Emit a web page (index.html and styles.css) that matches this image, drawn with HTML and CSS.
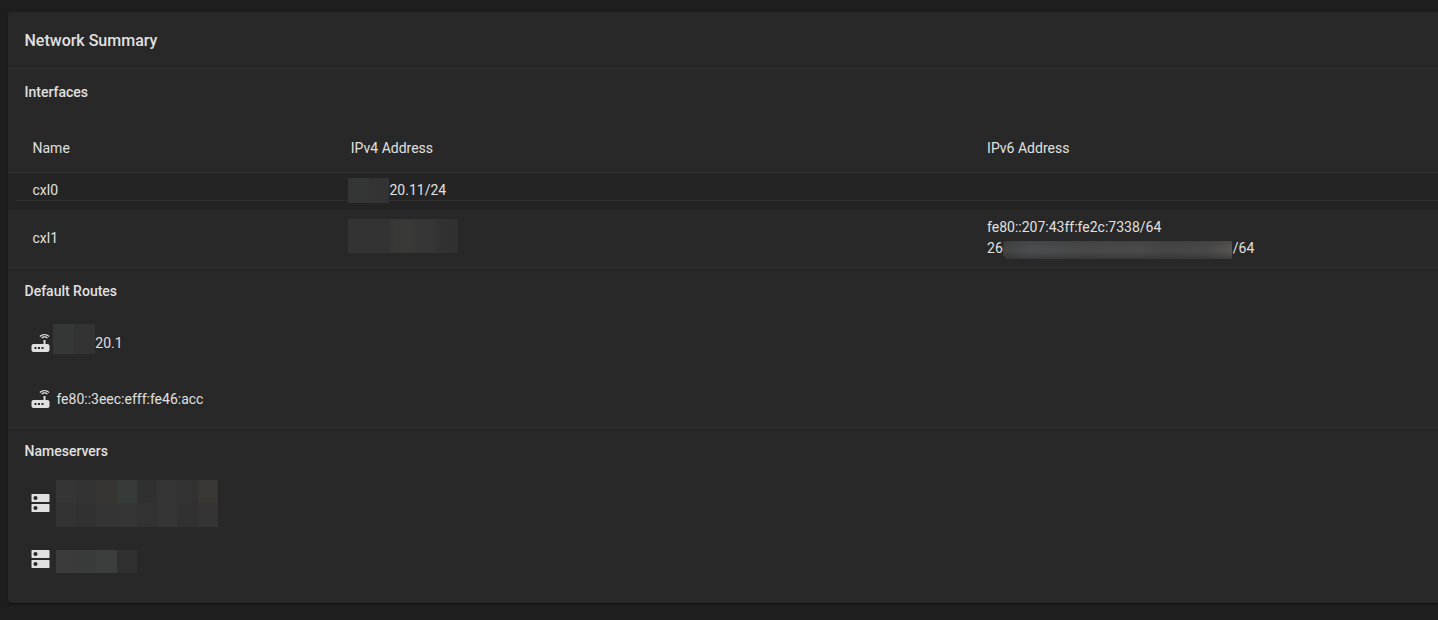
FILE: index.html
```html
<!DOCTYPE html>
<html lang="en">
<head>
    <meta charset="UTF-8">
    <meta name="viewport" content="width=device-width, initial-scale=1.0">
    <title>Network Summary</title>
    <link rel="stylesheet" href="styles.css">
</head>
<body>
    <svg class="symbols">
        <symbol id="router" viewBox="-0.5 0 24 24">
            <path d="M20.2 5.9l.8-.8C19.6 3.7 17.8 3 16 3s-3.6.7-5 2.1l.8.8C13 4.8 14.5 4.2 16 4.2s3 .6 4.2 1.7zm-.9.8c-.9-.9-2.1-1.4-3.3-1.4s-2.4.5-3.3 1.4l.8.8c.7-.7 1.6-1 2.5-1s1.8.3 2.5 1l.8-.8zM19 13h-2V9h-2v4H5c-1.1 0-2 .9-2 2v4c0 1.1.9 2 2 2h14c1.1 0 2-.9 2-2v-4c0-1.1-.9-2-2-2zM8 18H6v-2h2v2zm3.5 0h-2v-2h2v2zm3.5 0h-2v-2h2v2z"/>
        </symbol>
        <symbol id="dns" viewBox="-0.5 0 24 24">
            <path d="M20.5 13h-17c-.3 0-.5.2-.5.5v7c0 .3.2.5.5.5h17c.3 0 .5-.2.5-.5v-7c0-.3-.2-.5-.5-.5zM7 19c-1.1 0-2-.9-2-2s.9-2 2-2 2 .9 2 2-.9 2-2 2zM20.5 3h-17c-.3 0-.5.2-.5.5v7c0 .3.2.5.5.5h17c.3 0 .5-.2.5-.5v-7c0-.3-.2-.5-.5-.5zM7 9c-1.1 0-2-.9-2-2s.9-2 2-2 2 .9 2 2-.9 2-2 2z"/>
        </symbol>
    </svg>

    <div class="card">
        <h3 class="card-title">Network Summary</h3>

        <section class="interfaces">
            <h4>Interfaces</h4>
            <div class="row row-head">
                <span>Name</span>
                <span>IPv4 Address</span>
                <span>IPv6 Address</span>
            </div>
            <div class="row row-odd">
                <span>cxl0</span>
                <span class="address"><i class="mask mask-ip"></i>20.11/24</span>
                <span></span>
            </div>
            <div class="row row-even">
                <span>cxl1</span>
                <span class="address"><i class="mask mask-ip-full"></i></span>
                <span class="address-list">
                    <span>fe80::207:43ff:fe2c:7338/64</span>
                    <span class="address">26<i class="mask mask-ipv6"></i>/64</span>
                </span>
            </div>
        </section>

        <section class="routes">
            <h4>Default Routes</h4>
            <div class="item">
                <svg class="icon"><use href="#router"/></svg>
                <i class="mask mask-route"></i>
                <span>20.1</span>
            </div>
            <div class="item">
                <svg class="icon"><use href="#router"/></svg>
                <span class="item-text">fe80::3eec:efff:fe46:acc</span>
            </div>
        </section>

        <section class="nameservers">
            <h4>Nameservers</h4>
            <div class="item">
                <svg class="icon"><use href="#dns"/></svg>
                <i class="mask mask-dns-long"></i>
            </div>
            <div class="item">
                <svg class="icon"><use href="#dns"/></svg>
                <i class="mask mask-dns-short"></i>
            </div>
        </section>
    </div>
</body>
</html>
```
FILE: styles.css
```css
* {
    box-sizing: border-box;
}
body {
    margin: 0;
    padding: 12px 0 0 8px;
    height: 620px;
    overflow: hidden;
    background: #1e1e1e;
    color: #e0e0e0;
    font-family: Roboto, sans-serif;
    font-size: 14px;
    line-height: 20px;
}
.symbols {
    display: none;
}
.card {
    height: 591px;
    background: #282828;
    border-radius: 4px 0 0 4px;
    box-shadow: 0 2px 1px -1px rgba(0, 0, 0, 0.2), 0 1px 1px rgba(0, 0, 0, 0.14), 0 1px 3px rgba(0, 0, 0, 0.12);
}
.card-title {
    margin: 0;
    height: 57px;
    padding: 0 16.5px;
    border-bottom: 1px solid #303030;
    font-size: 16px;
    font-weight: 500;
    line-height: 57px;
}
h4 {
    margin: 0;
    height: 47px;
    padding: 0 16.5px;
    font-size: 14px;
    font-weight: 500;
    line-height: 47px;
}
.interfaces,
.routes {
    border-bottom: 1px solid #303030;
}
.row {
    display: grid;
    grid-template-columns: 318.3px 636.3px 1fr;
    align-items: center;
    padding-left: 24.5px;
}
.row-head {
    height: 57px;
    padding-top: 8px;
    border-bottom: 1px solid #303030;
}
.row-odd {
    height: 37px;
    padding-bottom: 4px;
    background: linear-gradient(#303030, #303030) 8px 27px / 100% 1px no-repeat #242424;
}
.row-even {
    height: 57px;
    padding-bottom: 2px;
}
.address {
    display: flex;
    align-items: center;
}
.address-list {
    line-height: 21px;
}
.mask {
    flex: none;
}
.mask-ip {
    width: 41px;
    height: 25px;
    margin: 2px 0.7px 0 -3px;
    background: linear-gradient(to right, #343635 50%, #333 50%);
}
.mask-ip-full {
    width: 110px;
    height: 34px;
    margin: -4px 0 0 -3px;
    border-radius: 0 2px 2px 0;
    background: linear-gradient(to right, #333 36%, #383837 42%, #393938 58%, #363636 62%, #363636 76%, #323232 82%, #303030);
}
.mask-ipv6 {
    width: 229px;
    height: 18px;
    margin: 2px 0.7px -2px 0.3px;
    background: linear-gradient(rgba(40, 40, 40, 0.2), transparent 40%, transparent 60%, rgba(40, 40, 40, 0.5)), linear-gradient(to right, #424242, #4b4d4f 12%, #484848 35%, #4a4a4a 60%, #454545 72%, #494949 90%, #575451);
    clip-path: polygon(0 1px, 2px 1px, 2px 0, 100% 0, 100% 100%, 2px 100%, 2px 15px, 0 15px);
}
.item {
    display: flex;
    align-items: center;
    height: 56px;
    padding-left: 20px;
}
.icon {
    width: 24px;
    height: 24px;
    fill: #e0e0e0;
}
.item-text {
    margin-left: 4.4px;
}
.mask-route {
    width: 42px;
    height: 30px;
    margin: -8px 0.3px 0 1px;
    background: linear-gradient(to right, #353736 50%, #333 50%);
}
.mask-dns-long {
    width: 162px;
    height: 47px;
    margin-left: 4px;
    background:
        linear-gradient(to right, #353535 20px, #333 20px 40px, #363532 40px 61px, #363a38 61px 81px, #303030 81px 101px, #353535 101px 121px, #323232 121px 142px, #383733 142px) top / 100% 23px no-repeat,
        linear-gradient(to right, #333 20px, #313131 20px 40px, #343434 40px 61px, #353535 61px 81px, #323232 81px 101px, #353535 101px 121px, #313131 121px 142px, #343434 142px);
}
.mask-dns-short {
    width: 81px;
    height: 23px;
    margin: 4px 0 0 4px;
    background: linear-gradient(to right, #3b3b3b 20px, #393b3a 20px 40px, #3b3e3c 40px 61px, #303030 61px);
}
```
